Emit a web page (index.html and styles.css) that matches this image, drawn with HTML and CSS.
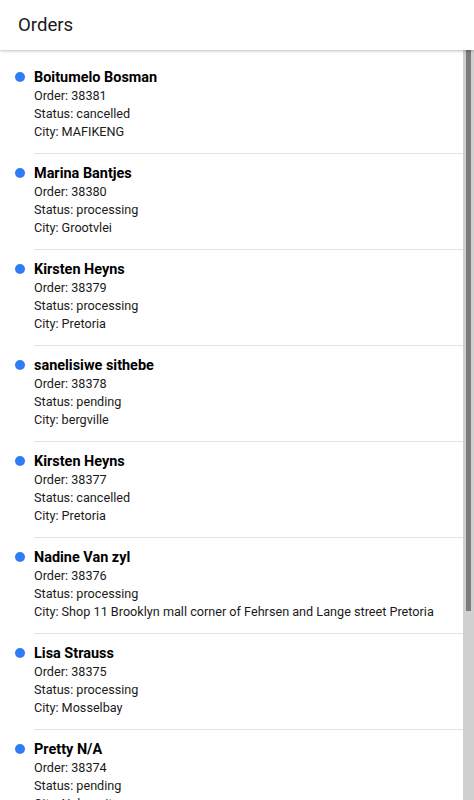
FILE: index.html
```html
<!DOCTYPE html>
<html>
<head>
<meta charset="utf-8">
<link rel="stylesheet" href="styles.css">
</head>
<body>
<div class="app">
  <header class="bar"><h1 class="title">Orders</h1></header>
  <div class="body">
  <main class="list">
    <div class="item"><span class="dot"></span><div class="info"><div class="name">Boitumelo Bosman</div><div class="line">Order: 38381</div><div class="line">Status: cancelled</div><div class="line">City: MAFIKENG</div></div></div>
    <div class="item"><span class="dot"></span><div class="info"><div class="name">Marina Bantjes</div><div class="line">Order: 38380</div><div class="line">Status: processing</div><div class="line">City: Grootvlei</div></div></div>
    <div class="item"><span class="dot"></span><div class="info"><div class="name">Kirsten Heyns</div><div class="line">Order: 38379</div><div class="line">Status: processing</div><div class="line">City: Pretoria</div></div></div>
    <div class="item"><span class="dot"></span><div class="info"><div class="name">sanelisiwe sithebe</div><div class="line">Order: 38378</div><div class="line">Status: pending</div><div class="line">City: bergville</div></div></div>
    <div class="item"><span class="dot"></span><div class="info"><div class="name">Kirsten Heyns</div><div class="line">Order: 38377</div><div class="line">Status: cancelled</div><div class="line">City: Pretoria</div></div></div>
    <div class="item"><span class="dot"></span><div class="info"><div class="name">Nadine Van zyl</div><div class="line">Order: 38376</div><div class="line">Status: processing</div><div class="line">City: Shop 11 Brooklyn mall corner of Fehrsen and Lange street Pretoria</div></div></div>
    <div class="item"><span class="dot"></span><div class="info"><div class="name">Lisa Strauss</div><div class="line">Order: 38375</div><div class="line">Status: processing</div><div class="line">City: Mosselbay</div></div></div>
    <div class="item"><span class="dot"></span><div class="info"><div class="name">Pretty N/A</div><div class="line">Order: 38374</div><div class="line">Status: pending</div><div class="line">City: Nelspruit</div></div></div>
    <div class="item"><span class="dot"></span><div class="info"><div class="name">Johan Venter</div><div class="line">Order: 38373</div><div class="line">Status: processing</div><div class="line">City: Durban</div></div></div>
    <div class="item"><span class="dot"></span><div class="info"><div class="name">Anele Dlamini</div><div class="line">Order: 38372</div><div class="line">Status: pending</div><div class="line">City: Johannesburg</div></div></div>
  </main>
  <div class="scrollbar"><div class="thumb"></div></div>
  </div>
</div>
</body>
</html>
```
FILE: styles.css
```css
html, body {
  margin: 0;
  padding: 0;
  height: 100%;
  background: #ffffff;
}
body {
  font-family: Roboto, "Liberation Sans", sans-serif;
  color: #111;
  overflow: hidden;
}
.app {
  display: flex;
  flex-direction: column;
  height: 800px;
}
.bar {
  height: 50px;
  flex: 0 0 50px;
  display: flex;
  align-items: center;
  padding: 0 18px;
  background: #fff;
  box-shadow: 0 1px 3px rgba(0,0,0,0.25);
  position: relative;
  z-index: 1;
}
.title {
  margin: 0;
  font-size: 18.6px;
  font-weight: 400;
  color: #1a1a1a;
}
.body {
  flex: 1;
  display: flex;
  min-height: 0;
}
.list {
  flex: 1;
  overflow-y: hidden;
  padding: 8px 0 0 0;
}
.scrollbar {
  flex: 0 0 11px;
  width: 11px;
  background: #d0d0d0;
  display: flex;
  justify-content: center;
}
.thumb {
  width: 5px;
  height: 561px;
  background: #7b7b7b;
}
.item {
  display: flex;
  align-items: flex-start;
}
.dot {
  flex: 0 0 10px;
  width: 10px;
  height: 10px;
  border-radius: 50%;
  background: #2f7bf5;
  margin: 14px 9px 0 15px;
}
.info {
  flex: 1;
  padding: 11px 0 12px 0;
  border-bottom: 1px solid #e2e2e2;
}
.name {
  font-size: 14.45px;
  font-weight: 700;
  line-height: 18px;
  color: #000;
}
.line {
  font-size: 12.65px;
  line-height: 18px;
  color: #1a1a1a;
  white-space: nowrap;
}
```
